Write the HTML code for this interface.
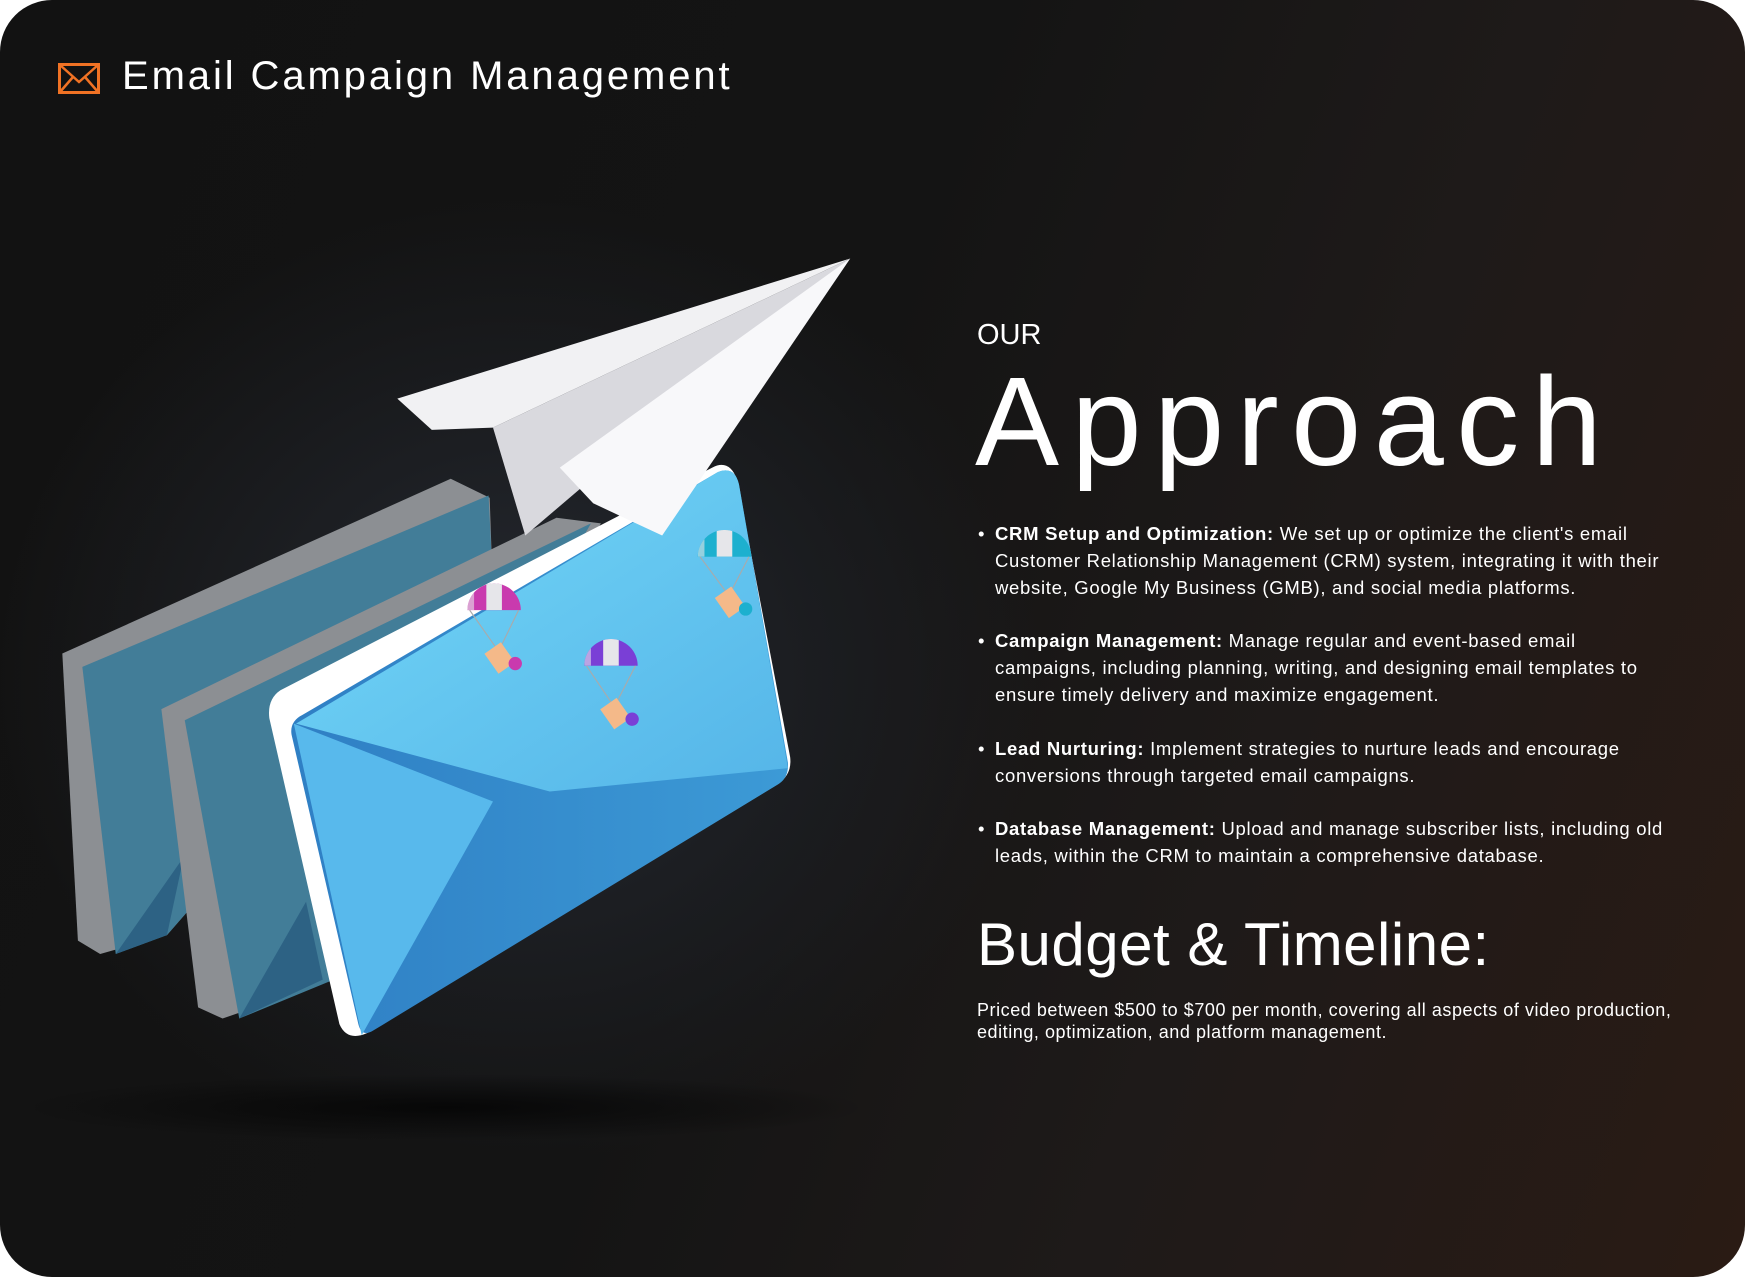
<!DOCTYPE html>
<html><head><meta charset="utf-8"><style>
html,body{margin:0;padding:0;background:#fff;}
body{width:1745px;height:1277px;position:relative;overflow:hidden;font-family:"Liberation Sans",sans-serif;color:#fff;}
.card{position:absolute;left:0;top:0;width:1745px;height:1277px;border-radius:52px;overflow:hidden;
background:radial-gradient(ellipse 520px 480px at 520px 680px,#262a31 0%,#1c1e22 50%,rgba(20,20,20,0) 100%),linear-gradient(110deg,#121212 0%,#141414 45%,#1e1a19 70%,#2a1b14 100%);}
.t{position:absolute;white-space:nowrap;}
svg.ill{position:absolute;left:0;top:0;}
ul{list-style:none;margin:0;padding:0;}
li{position:relative;margin-bottom:27px;}
li:before{content:"•";position:absolute;left:-17px;top:0;}
</style></head><body><div class="card">
<svg class="ill" width="1745" height="1277" viewBox="0 0 1568 1147">
<defs>
<radialGradient id="sh" cx="0.5" cy="0.5" r="0.5"><stop offset="0" stop-color="#050505" stop-opacity="0.9"/><stop offset="1" stop-color="#050505" stop-opacity="0"/></radialGradient>
<linearGradient id="fb" x1="0" y1="0" x2="1" y2="1"><stop offset="0" stop-color="#74d8f8"/><stop offset="1" stop-color="#55b5e8"/></linearGradient>
<linearGradient id="lb" x1="0" y1="0" x2="1" y2="0"><stop offset="0" stop-color="#2f7fc4"/><stop offset="1" stop-color="#3c9ad6"/></linearGradient>
<clipPath id="d1"><path d="M420,548 a24,24 0 0 1 48,0 z"/></clipPath>
<clipPath id="d2"><path d="M525,598 a24,24 0 0 1 48,0 z"/></clipPath>
<clipPath id="d3"><path d="M627,500 a24,24 0 0 1 48,0 z"/></clipPath>
</defs>
<ellipse cx="400" cy="995" rx="380" ry="30" fill="url(#sh)"/>
<!-- back env 1 -->
<polygon points="56,587 405,430 440,447 442,505 150,840 90,857 70,845" fill="#8c8f93"/>
<polygon points="74,599 439,445 442,505 150,840 104,857" fill="#427d98"/>
<polygon points="104,857 165,770 150,840" fill="#2d6284"/>
<!-- back env 2 -->
<polygon points="145,637 500,465 540,470 300,880 200,915 178,905" fill="#8c8f93"/>
<polygon points="166,647 531,470 300,880 215,915" fill="#427d98"/>
<polygon points="215,915 275,810 290,880" fill="#2d6284"/>
<!-- front env -->
<path d="M252,620 L640,420 Q655,412 662,430 L710,680 Q712,696 698,705 L330,928 Q312,936 305,920 L242,645 Q240,628 252,620 Z" fill="#ffffff"/>
<path d="M272,642 L645,424 Q660,418 664,435 L708,685 Q709,698 700,704 L335,926 Q325,932 322,920 L262,660 Q260,648 272,642 Z" fill="url(#lb)"/>
<polygon points="264,650 443,720 325,930" fill="#58b9ec"/>
<path d="M266,650 L645,424 Q660,418 664,435 L708,690 L494,711 Z" fill="url(#fb)"/>
<!-- plane -->
<polygon points="357,358 764,232 443,384 388,386" fill="#f1f1f3"/>
<polygon points="443,384 764,232 472,481" fill="#d9d9de"/>
<polygon points="503,420 764,232 595,481 533,452" fill="#f8f8fa"/>
<!-- parachutes -->
<g>
<path d="M420,548 a24,24 0 0 1 48,0 z" fill="#c93aae"/><g clip-path="url(#d1)"><rect x="437" y="520" width="14" height="30" fill="#e6e6ea"/><rect x="420" y="520" width="6" height="30" fill="#e6e6ea" opacity=".6"/></g>
<line x1="422" y1="548" x2="448" y2="585" stroke="#aaa"/><line x1="466" y1="548" x2="448" y2="585" stroke="#aaa"/>
<rect x="440" y="580" width="18" height="22" fill="#f4b989" transform="rotate(-35 449 591)"/><circle cx="463" cy="596" r="6" fill="#c93aae"/>
</g>
<g>
<path d="M525,598 a24,24 0 0 1 48,0 z" fill="#7a3fd6"/><g clip-path="url(#d2)"><rect x="542" y="570" width="14" height="30" fill="#e6e6ea"/><rect x="525" y="570" width="6" height="30" fill="#e6e6ea" opacity=".6"/></g>
<line x1="527" y1="598" x2="552" y2="635" stroke="#aaa"/><line x1="571" y1="598" x2="552" y2="635" stroke="#aaa"/>
<rect x="544" y="630" width="18" height="22" fill="#f4b989" transform="rotate(-35 553 641)"/><circle cx="568" cy="646" r="6" fill="#7a3fd6"/>
</g>
<g>
<path d="M627,500 a24,24 0 0 1 48,0 z" fill="#1db0cf"/><g clip-path="url(#d3)"><rect x="644" y="472" width="14" height="30" fill="#e6e6ea"/><rect x="627" y="472" width="6" height="30" fill="#e6e6ea" opacity=".6"/></g>
<line x1="629" y1="500" x2="655" y2="535" stroke="#aaa"/><line x1="673" y1="500" x2="655" y2="535" stroke="#aaa"/>
<rect x="647" y="530" width="18" height="22" fill="#f4b989" transform="rotate(-35 656 541)"/><circle cx="670" cy="547" r="6" fill="#1db0cf"/>
</g>
</svg>
<svg style="position:absolute;left:58px;top:63px" width="42" height="31" viewBox="0 0 42 31"><rect x="1.5" y="1.5" width="39" height="28" fill="none" stroke="#f07224" stroke-width="3"/><path d="M2,2 L21,19 L40,2 M2,29 L15,14 M40,29 L27,14" fill="none" stroke="#f07224" stroke-width="2.5"/></svg>
<div class="t" style="left:122px;top:54px;font-size:40px;letter-spacing:2.9px;font-weight:300">Email Campaign Management</div>
<div class="t" style="left:977px;top:319px;font-size:29px;">OUR</div>
<div class="t" style="left:975px;top:350px;font-size:126px;letter-spacing:12.5px;line-height:1.15">Approach</div>
<div style="position:absolute;left:995px;top:521px;font-size:18.5px;line-height:26.8px;white-space:nowrap;letter-spacing:.7px">
<ul>
<li><b>CRM Setup and Optimization:</b> We set up or optimize the client's email<br>Customer Relationship Management (CRM) system, integrating it with their<br>website, Google My Business (GMB), and social media platforms.</li>
<li><b>Campaign Management:</b> Manage regular and event-based email<br>campaigns, including planning, writing, and designing email templates to<br>ensure timely delivery and maximize engagement.</li>
<li><b>Lead Nurturing:</b> Implement strategies to nurture leads and encourage<br>conversions through targeted email campaigns.</li>
<li><b>Database Management:</b> Upload and manage subscriber lists, including old<br>leads, within the CRM to maintain a comprehensive database.</li>
</ul></div>
<div class="t" style="left:977px;top:910px;font-size:60px;letter-spacing:0.5px">Budget &amp; Timeline:</div>
<div class="t" style="left:977px;top:999px;font-size:18px;line-height:22px;letter-spacing:.55px">Priced between $500 to $700 per month, covering all aspects of video production,<br>editing, optimization, and platform management.</div>
</div></body></html>
